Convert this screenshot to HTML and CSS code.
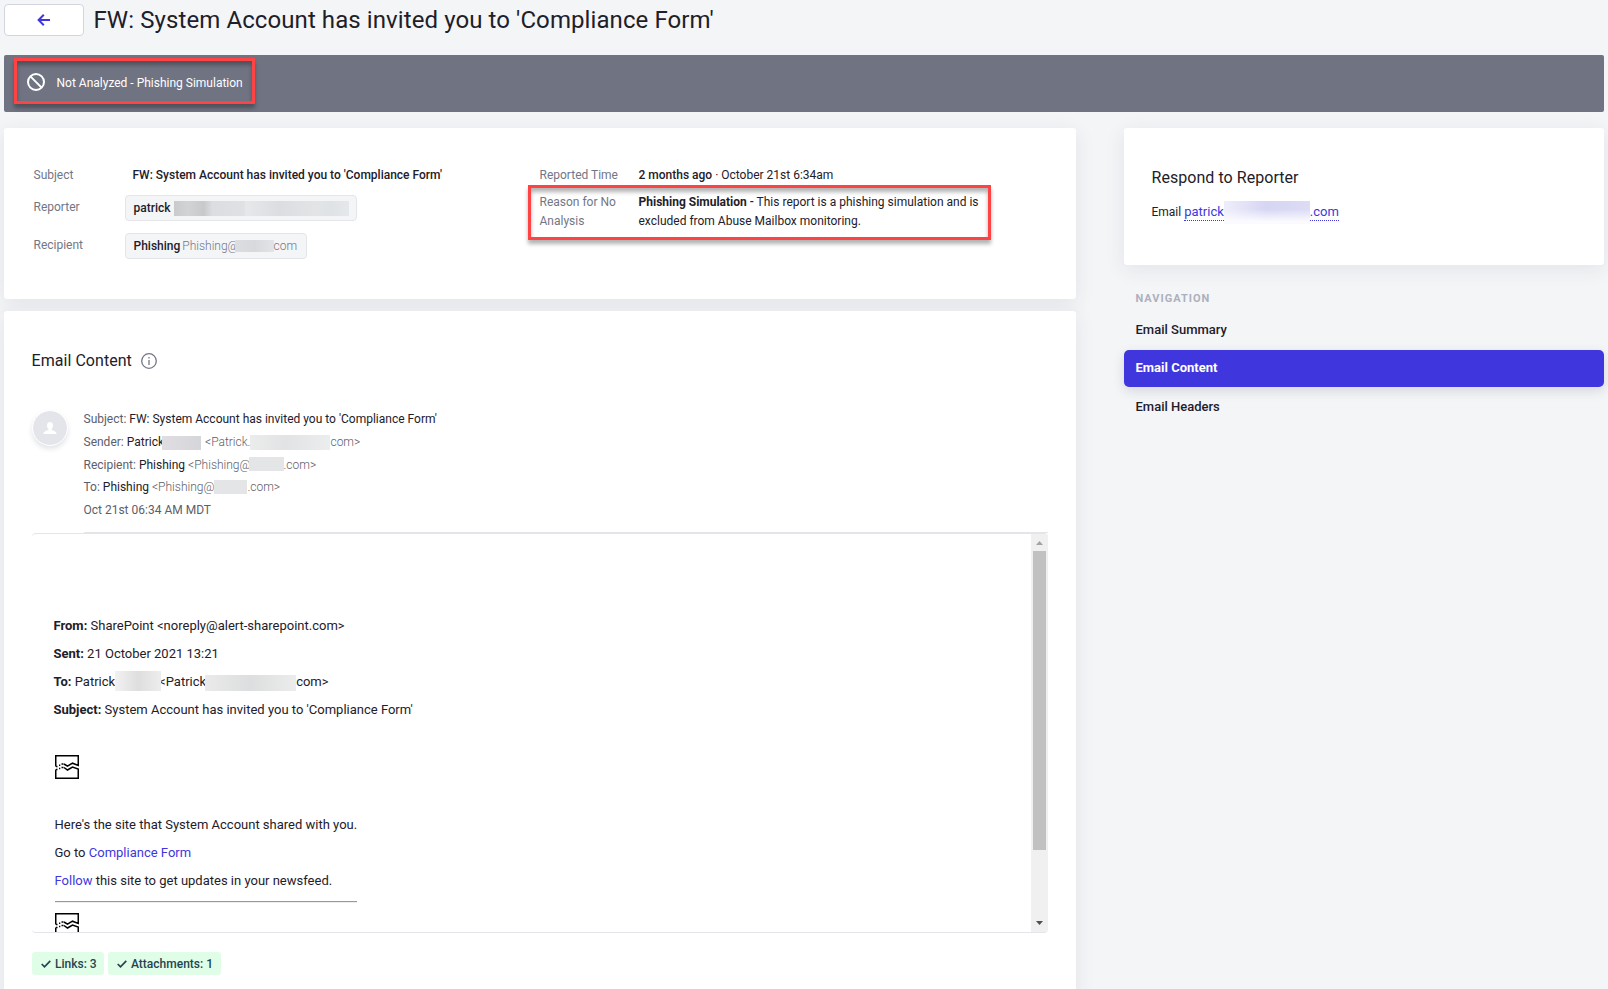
FILE: index.html
```html
<!DOCTYPE html>
<html lang="en">
<head>
  <meta charset="UTF-8">
  <meta name="viewport" content="width=device-width, initial-scale=1.0">
  <title>FW: System Account has invited you to 'Compliance Form'</title>
  <link rel="stylesheet" href="styles.css">
</head>
<body>

  <header class="page-header">
    <button class="back-button" aria-label="Back">
      <svg width="14" height="14" viewBox="0 0 14 14" fill="none" stroke="#4036dd" stroke-width="2"><path d="M13 7H2M6.8 1.8L1.6 7l5.2 5.2"/></svg>
    </button>
    <h1>FW: System Account has invited you to 'Compliance Form'</h1>
  </header>

  <div class="banner">
    <div class="banner-status highlight">
      <svg width="18" height="18" viewBox="0 0 18 18" fill="none" stroke="#fff" stroke-width="2"><circle cx="9" cy="9" r="8"/><path d="M3.4 3.4l11.2 11.2"/></svg>
      <span>Not Analyzed - Phishing Simulation</span>
    </div>
  </div>

  <div class="layout">
    <main class="main">
      <section class="card summary">
        <dl class="details">
          <dt>Subject</dt>
          <dd class="subject">FW: System Account has invited you to 'Compliance Form'</dd>
          <dt>Reporter</dt>
          <dd><span class="chip chip-reporter"><b>patrick</b><i class="redact redact-reporter"></i></span></dd>
          <dt>Recipient</dt>
          <dd><span class="chip chip-recipient"><b>Phishing</b><span class="address">Phishing@</span><i class="redact redact-recipient"></i><span class="address">com</span></span></dd>
        </dl>
        <div class="report">
          <div class="report-row">
            <span class="label">Reported Time</span>
            <span><b>2 months ago</b> · October 21st 6:34am</span>
          </div>
          <div class="report-row reason highlight">
            <span class="label">Reason for No Analysis</span>
            <span><b class="strong">Phishing Simulation</b> <b>-</b> This report is a phishing simulation and is excluded from Abuse Mailbox monitoring.</span>
          </div>
        </div>
      </section>

      <section class="card content">
        <h2>Email Content
          <svg width="16" height="16" viewBox="0 0 16 16" fill="none" stroke="#737685"><circle cx="8" cy="8" r="7.3" stroke-width="1.3"/><path d="M8 7v5M8 4v1.4" stroke-width="1.3"/></svg>
        </h2>

        <div class="message-head">
          <div class="avatar">
            <svg width="14" height="13" viewBox="0 0 14 13" fill="#fff"><path d="M7 0c2 0 3 1.400 3 3.300 0 1.700-.7 3.100-1.500 3.800v1c2.200.6 4.900 1.200 5 3.900H.5c.1-2.700 2.800-3.300 5-3.900v-1C4.700 6.400 4 5 4 3.300 4 1.400 5 0 7 0z"/></svg>
          </div>
          <div class="message-meta">
            <div>Subject: <b>FW: System Account has invited you to 'Compliance Form'</b></div>
            <div>Sender: <b>Patrick</b><i class="redact redact-name"></i><span class="light">&lt;Patrick.</span><i class="redact redact-address"></i><span class="light">com&gt;</span></div>
            <div>Recipient: <b>Phishing</b> <span class="light">&lt;Phishing@</span><i class="redact redact-domain"></i><span class="light">.com&gt;</span></div>
            <div>To: <b>Phishing</b> <span class="light">&lt;Phishing@</span><i class="redact redact-domain-to"></i><span class="light">.com&gt;</span></div>
            <div>Oct 21st 06:34 AM MDT</div>
          </div>
        </div>

        <div class="frame">
          <div class="email">
            <div class="email-head">
              <p><b>From:</b> SharePoint &lt;noreply@alert-sharepoint.com&gt;</p>
              <p><b>Sent:</b> 21 October 2021 13:21</p>
              <p><b>To:</b> Patrick<i class="redact redact-to-name"></i>&lt;Patrick<i class="redact redact-to-address"></i>com&gt;</p>
              <p><b>Subject:</b> System Account has invited you to 'Compliance Form'</p>
            </div>
            <svg class="missing" width="24" height="24" viewBox="0 0 24 24" fill="none" stroke="#000" stroke-width="1.500"><path d="M.75 11.500V.75h22.500V10.500L17.500 8.200l-5 3-3.500-2.200M.75 14.500v8.750h22.500V14L17.500 12l-5 3-3.500-2.500"/><path d="M1 11.600h1.500M4 10.200h1.300M6.500 9h2M1 14.600h1.500M4 13.600h1.300M6.500 12.500h2"/></svg>
            <div class="email-body">
              <p>Here's the site that System Account shared with you.</p>
              <p>Go to <a href="#">Compliance Form</a></p>
              <p><a href="#">Follow</a> this site to get updates in your newsfeed.</p>
            </div>
            <hr>
            <svg class="missing" width="24" height="24" viewBox="0 0 24 24" fill="none" stroke="#000" stroke-width="1.500"><path d="M.75 11.500V.75h22.500V10.500L17.500 8.200l-5 3-3.500-2.200M.75 14.500v8.750h22.500V14L17.500 12l-5 3-3.500-2.500"/><path d="M1 11.600h1.500M4 10.200h1.300M6.500 9h2M1 14.600h1.500M4 13.600h1.300M6.500 12.500h2"/></svg>
          </div>
          <div class="scrollbar">
            <svg width="7" height="4" viewBox="0 0 7 4" fill="#a3a3a3"><path d="M0 4L3.500 0 7 4z"/></svg>
            <div class="thumb"></div>
            <svg class="down" width="7" height="4" viewBox="0 0 7 4" fill="#505050"><path d="M0 0h7L3.500 4z"/></svg>
          </div>
        </div>

        <div class="badges">
          <span class="badge badge-links"><svg width="10" height="8" viewBox="0 0 10 8" fill="none" stroke="#234450" stroke-width="1.700"><path d="M.7 4l2.800 2.800L9.300.8"/></svg>Links: 3</span>
          <span class="badge badge-attachments"><svg width="10" height="8" viewBox="0 0 10 8" fill="none" stroke="#234450" stroke-width="1.700"><path d="M.7 4l2.800 2.800L9.300.8"/></svg>Attachments: 1</span>
        </div>
      </section>
    </main>

    <aside class="sidebar">
      <section class="card respond">
        <h2>Respond to Reporter</h2>
        <p>Email <a href="#">patrick</a><i class="redact redact-mail"></i><a href="#">.com</a></p>
      </section>
      <nav>
        <h3>NAVIGATION</h3>
        <a href="#">Email Summary</a>
        <a href="#" class="active">Email Content</a>
        <a href="#">Email Headers</a>
      </nav>
    </aside>
  </div>

</body>
</html>
```
FILE: styles.css
```css
* {
  box-sizing: border-box;
}
body {
  margin: 0;
  padding: 4px 4px 0;
  height: 989px;
  overflow: hidden;
  background: #f4f5f7;
  color: #1e2029;
  font-family: Roboto, "Liberation Sans", sans-serif;
  font-size: 12px;
}
h1, h2, h3, p, dl, dd {
  margin: 0;
}
b {
  font-weight: 500;
}
a {
  color: #4036dd;
  text-decoration: none;
}
svg {
  display: block;
  flex: none;
}
.page-header {
  display: flex;
  gap: 9.5px;
  height: 51px;
}
.back-button {
  display: flex;
  align-items: center;
  justify-content: center;
  width: 80px;
  height: 32px;
  padding: 0;
  background: #fff;
  border: 1px solid #d2d5e1;
  border-radius: 4px;
}
h1 {
  font-size: 24px;
  font-weight: 400;
  line-height: 32px;
  letter-spacing: 0.09px;
}
.banner {
  height: 57px;
  padding: 3px 10px;
  background: #707382;
  border-radius: 2px;
}
.highlight {
  border: 3px solid #fe4344;
  box-shadow: 0 4px 4px rgba(0, 0, 0, 0.3), inset 0 4px 4px rgba(0, 0, 0, 0.3);
}
.banner-status {
  display: flex;
  align-items: center;
  gap: 11.5px;
  width: 241px;
  height: 46px;
  padding: 2px 0 0 10px;
  color: #fff;
}
.banner-status span {
  padding-top: 2px;
}
.layout {
  display: flex;
  justify-content: space-between;
  margin-top: 16px;
}
.main {
  width: 1072px;
}
.card {
  background: #fff;
  border-radius: 3px;
  box-shadow: 0 4px 20px rgba(40, 50, 80, 0.09);
}
.summary {
  display: flex;
  height: 171px;
  padding: 38px 0 0 29.5px;
}
.details {
  display: grid;
  grid-template-columns: 91.5px 399px;
  grid-template-rows: 29px 38px 38px;
  line-height: 19px;
}
dt, .label {
  color: #737685;
}
.subject {
  padding-left: 7.5px;
  font-weight: 500;
}
.details dt:nth-of-type(n+2) {
  padding-top: 3px;
}
.chip {
  display: flex;
  align-items: center;
  height: 26px;
  padding: 0 7.5px;
  background: #f4f5f7;
  border: 1px solid #e4e5ea;
  border-radius: 4px;
}
.chip-reporter {
  width: 232px;
}
.chip-recipient {
  width: 182px;
}
.address {
  color: #737685;
  font-weight: 300;
}
.chip b + .address {
  margin-left: 2px;
}
.redact {
  display: inline-block;
  flex: none;
  background: #e4e5e7;
  vertical-align: top;
}
.redact-reporter {
  width: 175px;
  height: 15px;
  margin-left: 3px;
  background: linear-gradient(90deg, #c9cacc, #d2d3d5 8%, #c8c9cb 17%, #dcdde0 22%, #dfe1e4 40%, #e7e8ea 41%, #dcdde0 60%, #e3e4e6 80%, #dfe3e6 90%, #e6e7e9);
}
.redact-recipient {
  width: 39px;
  height: 12px;
  margin-left: -4px;
  background: linear-gradient(90deg, #dcdde0, #d7d9dc, #e2e4e7);
}
.report-row {
  display: flex;
  line-height: 19px;
}
.report-row .label {
  flex: none;
  width: 99px;
  padding-right: 10px;
}
.report {
  padding-left: 15.5px;
}
.reason {
  width: 463px;
  height: 55px;
  margin-left: -12px;
  padding: 5px 0 0 9px;
}
.strong {
  font-weight: 700;
}
.content {
  height: 700px;
  margin-top: 12px;
  padding: 38px 28px 0;
}
h2 {
  display: flex;
  align-items: center;
  gap: 9px;
  font-size: 16px;
  font-weight: 400;
  line-height: 24px;
  letter-spacing: 0.05px;
}
.content h2 {
  margin-left: -0.5px;
}
.message-head {
  display: flex;
  height: 123px;
  margin-top: 37px;
}
.avatar {
  display: flex;
  align-items: center;
  justify-content: center;
  width: 36px;
  height: 36px;
  margin-right: 15.5px;
  background: #e4e5ea;
  background-clip: padding-box;
  border: 1px solid #fff;
  border-radius: 50%;
  box-shadow: 0 3px 5px rgba(40, 50, 80, 0.13);
}
.message-meta {
  flex: 1;
  margin-top: -2px;
  border-bottom: 1px solid #e4e5ea;
  line-height: 22.750px;
  color: #5c5e6a;
}
.message-meta b {
  color: #1e2029;
  font-weight: 400;
}
.light {
  font-weight: 300;
}
.redact-name {
  width: 39px;
  height: 14px;
  margin: 5px 4px 0 -2px;
  background: linear-gradient(90deg, #e0dde1, #d5d6da);
}
.redact-address {
  width: 80px;
  height: 15px;
  margin-top: 4px;
  background: linear-gradient(90deg, #ebecec, #e1e3e4 45%, #ecedee);
}
.redact-domain {
  width: 35px;
  height: 14px;
  margin: 3px 0 0 -2px;
}
.redact-domain-to {
  width: 33px;
  height: 14px;
  margin-top: 4px;
}
.frame {
  display: flex;
  justify-content: space-between;
  height: 400px;
  border: solid #e4e5ea;
  border-width: 1px 0;
  border-radius: 4px;
  overflow: hidden;
}
.email {
  padding: 78px 0 0 21.5px;
  font-size: 13px;
  line-height: 28px;
}
.email-head b {
  font-weight: 700;
}
.missing {
  margin-left: 1.5px;
}
.email-head + .missing {
  margin-top: 31px;
}
.email-body {
  margin: 32px 0 0 1px;
}
hr {
  width: 302px;
  height: 2px;
  margin: 6px 0 10px 1.5px;
  border: 0;
  border-top: 1px solid #999;
  border-bottom: 1px solid #eee;
}
/* sits over the start of the address */
.redact-to-name {
  position: relative;
  width: 46px;
  height: 20px;
  margin: 3px -2px 0 0;
  background: linear-gradient(90deg, #f2f2f2, #dedede 50%, #ededed);
}
.redact-to-address {
  width: 91px;
  height: 16px;
  margin: 7px 0 0 -1px;
  background: linear-gradient(90deg, #eaeaea, #dcdedf 50%, #ececec);
}
.scrollbar {
  display: flex;
  flex-direction: column;
  align-items: center;
  width: 17px;
  padding: 7px 0;
  background: #f0f0f0;
}
.thumb {
  width: 13px;
  height: 299px;
  margin-top: 6px;
  background: #c1c1c1;
}
.down {
  margin-top: auto;
}
.badges {
  display: flex;
  gap: 4px;
  margin-top: 19px;
}
.badge {
  display: flex;
  align-items: center;
  gap: 4px;
  height: 23px;
  padding-left: 9px;
  background: #e0fde8;
  border-radius: 3px;
  color: #234450;
  font-weight: 500;
}
.badge-links {
  width: 72px;
}
.badge-attachments {
  width: 113px;
}
.sidebar {
  width: 480px;
}
.respond {
  height: 137px;
  padding: 38px 27.5px 0;
}
.respond p {
  margin-top: 11px;
  line-height: 22px;
}
.respond a {
  display: inline-block;
  font-size: 13px;
  line-height: 17px;
  border-bottom: 1px dotted #4036dd;
}
.redact-mail {
  width: 86px;
  height: 23px;
  background: linear-gradient(rgba(255, 255, 255, 0) 35%, #fbfbff 90%), linear-gradient(90deg, #eeeefb, #d6d5f3 50%, #dddcf5);
}
nav {
  display: flex;
  flex-direction: column;
  padding-top: 26px;
}
h3 {
  margin: 0 0 4px 11.5px;
  color: #adb0bd;
  font-size: 11px;
  font-weight: 700;
  line-height: 16px;
  letter-spacing: 1px;
}
nav a {
  height: 37px;
  padding-left: 11.5px;
  border-radius: 5px;
  color: #1e2029;
  font-size: 13px;
  font-weight: 500;
  line-height: 37px;
}
nav .active {
  margin: 2px 0 1px;
  background: #4036dd;
  box-shadow: 0 4px 12px rgba(40, 50, 80, 0.15);
  color: #fff;
  font-weight: 700;
  line-height: 35px;
}
```
